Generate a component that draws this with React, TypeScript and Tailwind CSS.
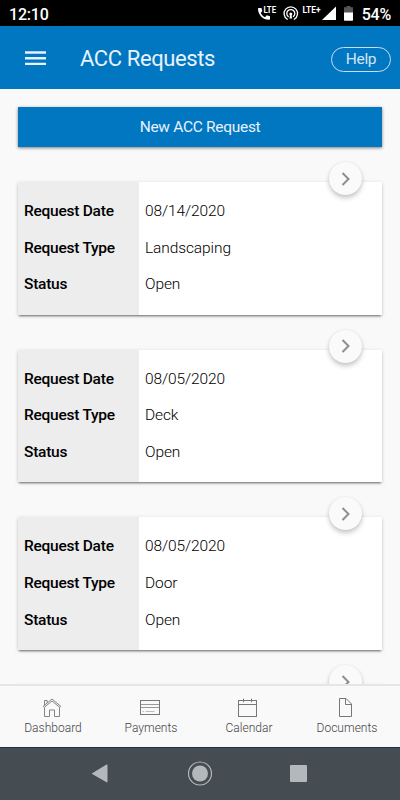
import type { ReactNode } from "react";

type AccRequest = {
  id: number;
  date: string;
  type: string;
  status: string;
};

const requests: AccRequest[] = [
  { id: 1, date: "08/14/2020", type: "Landscaping", status: "Open" },
  { id: 2, date: "08/05/2020", type: "Deck", status: "Open" },
  { id: 3, date: "08/05/2020", type: "Door", status: "Open" },
];

function StatusIcons() {
  return (
    <svg width="98" height="26" viewBox="0 0 98 26" fill="white">
      <path d="M2.700 8H5c.4 0 .7.3.7.6l.5 2.200c.1.300 0 .5-.2.700L4.700 13c1 1.900 2.400 3.200 4.300 4.200l1.500-1.600c.2-.2.5-.3.800-.2l2.100.5c.4.1.6.400.6.700v2.500c0 .4-.3.700-.7.700C7 20 2 14.700 2 8.700c0-.4.300-.7.700-.7Z" />
      <text x="7.500" y="12.500" fontSize="8.500" fontWeight="700" textLength="12.500" lengthAdjust="spacingAndGlyphs">
        LTE
      </text>
      <g fill="none" stroke="white" strokeWidth="1.300" strokeLinecap="round">
        <path d="M31.300 19.200a6.700 6.700 0 1 1 7 0" />
        <path d="M32.200 16.600a4 4 0 1 1 5.200 0" />
      </g>
      <circle cx="34.800" cy="13.900" r="1.500" />
      <path d="M34.300 14h1l.9 4.500h-2.800Z" />
      <text x="46.500" y="12.700" fontSize="9" fontWeight="700" textLength="18" lengthAdjust="spacingAndGlyphs">
        LTE+
      </text>
      <path d="M66 20 80 6.500V20Z" />
      <path d="M90.500 6h4v1.300h2.500V13h-9V7.300h2.500Z" fill="#555" />
      <path d="M88 12.600h9v7.300c0 .5-.3.800-.8.800h-7.400c-.5 0-.8-.3-.8-.8Z" />
    </svg>
  );
}

function StatusBar() {
  return (
    <div className="flex h-[26px] shrink-0 items-center justify-between bg-black px-[9px] text-white">
      <span className="pt-[3px] text-[16px] leading-none font-medium tracking-[-0.2px]">12:10</span>
      <div className="flex items-center gap-[8px]">
        <StatusIcons />
        <span className="pt-[3px] text-[16px] leading-none font-medium tracking-[-0.2px]">54%</span>
      </div>
    </div>
  );
}

function MenuIcon() {
  return (
    <svg width="21" height="15" viewBox="0 0 21 15" fill="currentColor">
      <path d="M0 .3h21v2.400H0ZM0 6h21v2.400H0ZM0 11.700h21v2.400H0Z" />
    </svg>
  );
}

function Header() {
  return (
    <header className="flex h-[63px] shrink-0 items-center bg-[#0077c0] pr-[9px] pl-[25px] text-[#e8f1fc]">
      <button type="button" aria-label="Open menu" className="mt-[2px]">
        <MenuIcon />
      </button>
      <h1 className="ml-[34px] flex-1 pt-[3px] text-[22px] leading-none tracking-[-0.4px]">ACC Requests</h1>
      <button
        type="button"
        className="mt-[3px] h-[25px] w-[60px] rounded-full border border-[#c8dcf5] pt-px text-[15.5px] leading-none tracking-[-0.3px] text-[#d5e4f5]"
      >
        Help
      </button>
    </header>
  );
}

function Row({ label, children }: { label: string; children: ReactNode }) {
  return (
    <div className="flex h-[36.7px] items-center text-[15.5px] leading-none text-black">
      <dt className="w-[121px] pl-[6px] font-medium tracking-[-0.25px]">{label}</dt>
      <dd className="pl-[6px] font-light tracking-[-0.1px]">{children}</dd>
    </div>
  );
}

function ChevronButton() {
  return (
    <button
      type="button"
      aria-label="View request"
      className="absolute -top-[20px] right-[20px] flex size-[33px] items-center justify-center rounded-full bg-[#fafafa] shadow-[0_3px_5px_rgba(0,0,0,0.22),0_0_3px_rgba(0,0,0,0.06)]"
    >
      <svg width="10" height="16" viewBox="0 0 10 16" fill="none" stroke="#8e8e8e" strokeWidth="2">
        <path d="m1.500 2 6 6-6 6" />
      </svg>
    </button>
  );
}

function RequestCard({ request }: { request?: AccRequest }) {
  return (
    <article className="relative h-[132.7px] shrink-0 bg-[linear-gradient(to_right,#ededed_121px,#fff_121px)] pt-[11.4px] shadow-[0_2px_2px_-1px_rgba(0,0,0,0.5),0_1px_4px_rgba(0,0,0,0.16)]">
      {request && (
        <dl>
          <Row label="Request Date">{request.date}</Row>
          <Row label="Request Type">{request.type}</Row>
          <Row label="Status">{request.status}</Row>
        </dl>
      )}
      <ChevronButton />
    </article>
  );
}

function HomeIcon() {
  return (
    <svg width="20" height="20" viewBox="0 0 20 20" fill="none" stroke="#777" strokeWidth="0.9">
      <path d="M1.200 8.300 10 1l8.800 7.300-1 1.100L10 3 2.200 9.400Z" />
      <path d="M2.500 7V2.500h2.700v2.300M2.500 9.500v9h5v-6.500h5v6.500h5v-9" />
    </svg>
  );
}

function CardIcon() {
  return (
    <svg width="20" height="20" viewBox="0 0 20 20" fill="none" stroke="#777">
      <rect x=".5" y="2.500" width="19" height="14" />
      <path d="M1 6.500h18M1 9.500h18" stroke="#999" />
      <path d="M2.500 13.500H4M5.500 13.500h9" stroke="#bbb" />
    </svg>
  );
}

function CalendarIcon() {
  return (
    <svg width="20" height="20" viewBox="0 0 20 20" fill="none" stroke="#777">
      <rect x=".5" y="2.500" width="18" height="16" />
      <path d="M.5 6.500H19M5.500.7v3.500M13.500.7v3.500" />
    </svg>
  );
}

function DocumentIcon() {
  return (
    <svg width="20" height="20" viewBox="0 0 20 20" fill="none" stroke="#777">
      <path d="M3.500.5h6.500l5.500 5.500v12.500h-12Z" />
      <path d="M9.500.8V6.500h5.800" />
    </svg>
  );
}

const tabs = [
  { label: "Dashboard", icon: <HomeIcon />, width: "w-[106px]" },
  { label: "Payments", icon: <CardIcon />, width: "w-[90px]" },
  { label: "Calendar", icon: <CalendarIcon />, width: "w-[106px]" },
  { label: "Documents", icon: <DocumentIcon />, width: "w-[90px]" },
];

function TabBar() {
  return (
    <nav className="flex h-[63px] shrink-0 border-t-2 border-[#e6e6e6] bg-[#f9f9f9]">
      {tabs.map((tab) => (
        <a
          key={tab.label}
          href={"#" + tab.label.toLowerCase()}
          className={`flex shrink-0 flex-col items-center pt-[12px] text-[12px] leading-none font-light tracking-[0.02px] text-[#444] ${tab.width}`}
        >
          <span className="mr-[2px]">{tab.icon}</span>
          <span className="mt-[4px]">{tab.label}</span>
        </a>
      ))}
    </nav>
  );
}

function SystemBar() {
  return (
    <div className="flex h-[53px] shrink-0 items-center justify-center border-t border-[#263238] bg-[#454d52]">
      <svg width="216" height="26" viewBox="0 0 216 26" fill="#b3b8ba">
        <path d="M.2 12.200 14.500 3.600q1-.5 1 .6v16.500q0 1-1 .5L.2 13.100q-.7-.5 0-.9Z" />
        <circle cx="108" cy="12.500" r="8" />
        <circle cx="108" cy="12.500" r="11.500" fill="none" stroke="#b3b8ba" strokeWidth="1.200" />
        <rect x="198" y="4" width="17" height="17" rx="1" />
      </svg>
    </div>
  );
}

export default function App() {
  return (
    <div className="flex h-[800px] w-[400px] flex-col overflow-hidden bg-[#f9f9f9] font-['Roboto',sans-serif]">
      <StatusBar />
      <Header />
      <main className="flex h-[595px] shrink-0 flex-col gap-[35px] overflow-hidden px-[18px] pt-[18px]">
        <button
          type="button"
          className="h-[40px] shrink-0 bg-[#0077c0] pt-px text-[15.5px] tracking-[-0.3px] text-[#e8f1fc] shadow-[0_1px_3px_rgba(0,0,0,0.5)]"
        >
          New ACC Request
        </button>
        {requests.map((request) => (
          <RequestCard key={request.id} request={request} />
        ))}
        <RequestCard />
      </main>
      <TabBar />
      <SystemBar />
    </div>
  );
}
